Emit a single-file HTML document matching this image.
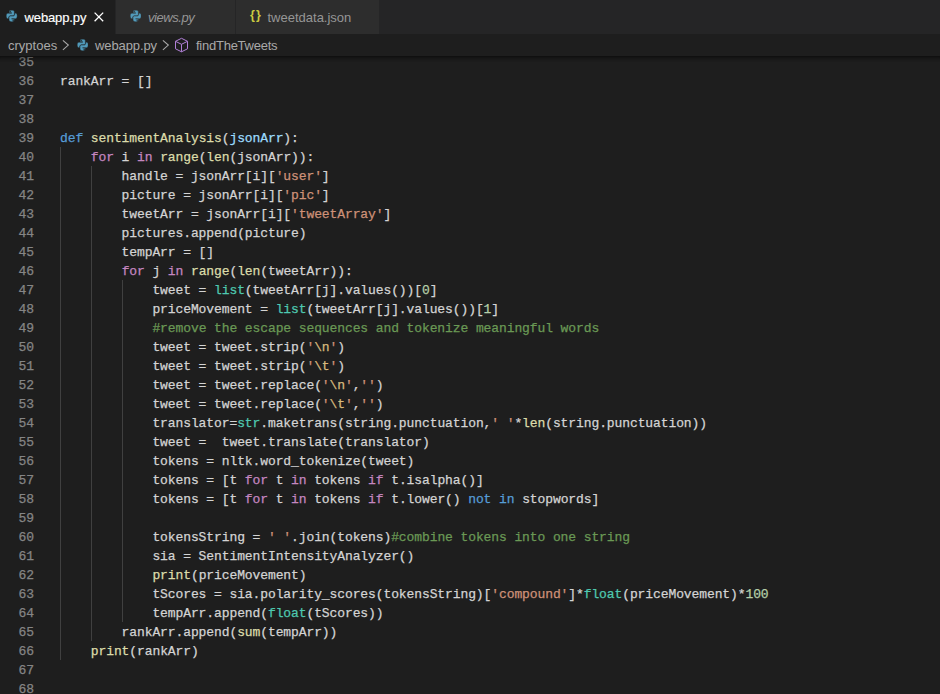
<!DOCTYPE html>
<html><head><meta charset="utf-8"><title>webapp.py</title>
<style>
html,body{margin:0;padding:0;background:#1e1e1e;}
body{width:940px;height:694px;overflow:hidden;position:relative;font-family:"Liberation Sans",sans-serif;}
#tabs{position:absolute;left:0;top:0;width:940px;height:34px;background:#252526;}
.tab{position:absolute;top:0;height:34px;background:#2d2d2d;color:#969696;font-size:13px;line-height:34px;white-space:nowrap;}
.tab.act{background:#1e1e1e;color:#ffffff;}
.tab .lbl{position:absolute;top:1px;}
.tab svg{position:absolute;}
#bc{position:absolute;left:0;top:34px;width:940px;height:22px;background:#1e1e1e;color:#a9a9a9;font-size:13px;line-height:22px;white-space:nowrap;z-index:3;}
#sh{position:absolute;left:0;top:56px;width:940px;height:6px;z-index:4;box-shadow:#000000 0 6px 6px -6px inset;}
#bc span{position:absolute;top:1px;}#bc svg{position:absolute;}
#ed{position:absolute;left:0;top:52px;width:940px;height:642px;overflow:hidden;z-index:1;}
.ln{position:relative;height:19px;line-height:19px;white-space:pre;font-family:"Liberation Mono",monospace;font-size:13px;letter-spacing:-0.1px;color:#d4d4d4;-webkit-text-stroke:0.25px;}
.no{position:absolute;left:0;top:1px;width:34px;text-align:right;color:#858585;}
.cd{position:absolute;left:60px;top:1px;}
.k{color:#569cd6}.c{color:#c586c0}.f{color:#dcdcaa}.v{color:#9cdcfe}.s{color:#ce9178}.e{color:#d7ba7d}.n{color:#b5cea8}.m{color:#6a9955}.t{color:#4ec9b0}
.g{position:absolute;width:1px;background:#404040;z-index:0;}
</style></head><body>
<div id="tabs">
 <div class="tab act" style="left:0;width:115px;">
  <svg style="left:6.20px;top:9.89px;" width="11.40" height="12.01" viewBox="-2.0 -2.0 115.0 117.0" preserveAspectRatio="none" fill="#519aba" stroke="#1e1e1e" stroke-width="4"><path d="M54.9 0C50.3 0 46 .4 42.1 1.1 30.8 3.1 28.7 7.3 28.7 15v10.3h26.8v3.4H18.6c-7.8 0-14.6 4.7-16.7 13.6-2.5 10.2-2.6 16.6 0 27.2 1.9 8 6.4 13.6 14.2 13.6h9.3V70.8c0-8.8 7.6-16.6 16.7-16.6h26.8c7.5 0 13.4-6.1 13.4-13.6V15c0-7.2-6.1-12.7-13.4-13.9C64.3.3 59.5 0 54.9 0zM40.400 8.200c2.800 0 5 2.300 5 5.100s-2.200 5.100-5 5.100-5-2.300-5-5.100 2.200-5.100 5-5.100z"/><path d="M85.600 28.700v11.900c0 9.200-7.800 17-16.700 17H42.100c-7.300 0-13.400 6.300-13.400 13.600v25.500c0 7.300 6.300 11.500 13.400 13.600 8.500 2.500 16.600 3 26.800 0 6.700-2 13.400-5.900 13.400-13.600V86.500H55.500v-3.400h40.200c7.800 0 10.700-5.400 13.400-13.600 2.800-8.400 2.700-16.500 0-27.200-1.900-7.800-5.600-13.600-13.400-13.600H85.600zM70.600 93.300c2.800 0 5 2.300 5 5.100s-2.200 5.100-5 5.100-5-2.300-5-5.100 2.200-5.100 5-5.100z"/></svg>
  <span class="lbl" style="left:24.5px;-webkit-text-stroke:0.15px;letter-spacing:-0.12px;">webapp.py</span>
  <svg style="left:93.5px;top:12px;" width="10" height="10" viewBox="0 0 10 10"><path d="M0.6 0.6 L9.2 9.2 M9.2 0.6 L0.6 9.2" stroke="#ffffff" stroke-width="1.3" fill="none"/></svg>
 </div>
 <div class="tab" style="left:116px;width:119px;">
  <svg style="left:13.70px;top:9.89px;" width="11.40" height="12.01" viewBox="-2.0 -2.0 115.0 117.0" preserveAspectRatio="none" fill="#519aba" stroke="#2d2d2d" stroke-width="4"><path d="M54.9 0C50.3 0 46 .4 42.1 1.1 30.8 3.1 28.7 7.3 28.7 15v10.3h26.8v3.4H18.6c-7.8 0-14.6 4.7-16.7 13.6-2.5 10.2-2.6 16.6 0 27.2 1.9 8 6.4 13.6 14.2 13.6h9.3V70.8c0-8.8 7.6-16.6 16.7-16.6h26.8c7.5 0 13.4-6.1 13.4-13.6V15c0-7.2-6.1-12.7-13.4-13.9C64.3.3 59.5 0 54.9 0zM40.400 8.200c2.800 0 5 2.300 5 5.100s-2.200 5.100-5 5.100-5-2.300-5-5.100 2.200-5.100 5-5.100z"/><path d="M85.600 28.700v11.900c0 9.200-7.800 17-16.700 17H42.100c-7.300 0-13.400 6.300-13.400 13.600v25.500c0 7.300 6.300 11.500 13.400 13.600 8.500 2.500 16.600 3 26.800 0 6.700-2 13.400-5.900 13.400-13.600V86.500H55.500v-3.400h40.200c7.800 0 10.700-5.400 13.400-13.600 2.800-8.400 2.700-16.500 0-27.200-1.900-7.800-5.600-13.600-13.400-13.600H85.600zM70.600 93.300c2.800 0 5 2.300 5 5.100s-2.200 5.100-5 5.100-5-2.300-5-5.100 2.200-5.100 5-5.100z"/></svg>
  <span class="lbl" style="left:32px;font-style:italic;letter-spacing:-0.45px;">views.py</span>
 </div>
 <div class="tab" style="left:236px;width:143px;">
  <span class="lbl" style="left:14px;top:-2px;color:#cbcb41;font-weight:bold;font-size:12.5px;letter-spacing:1.2px;">{}</span>
  <span class="lbl" style="left:31.5px;">tweetdata.json</span>
 </div>
</div>
<div id="bc">
 <span style="left:8px;">cryptoes</span>
 <svg style="left:61.8px;top:4.5px;" width="8" height="12" viewBox="0 0 8 12"><path d="M0.9 1.4 L6.3 6.1 L0.9 10.8" stroke="#a9a9a9" stroke-width="1.1" fill="none"/></svg>
 <svg style="left:76.90px;top:4.89px;" width="11.40" height="12.01" viewBox="-2.0 -2.0 115.0 117.0" preserveAspectRatio="none" fill="#519aba" stroke="#1e1e1e" stroke-width="4"><path d="M54.9 0C50.3 0 46 .4 42.1 1.1 30.8 3.1 28.7 7.3 28.7 15v10.3h26.8v3.4H18.6c-7.8 0-14.6 4.7-16.7 13.6-2.5 10.2-2.6 16.6 0 27.2 1.9 8 6.4 13.6 14.2 13.6h9.3V70.8c0-8.8 7.6-16.6 16.7-16.6h26.8c7.5 0 13.4-6.1 13.4-13.6V15c0-7.2-6.1-12.7-13.4-13.9C64.3.3 59.5 0 54.9 0zM40.400 8.200c2.800 0 5 2.300 5 5.100s-2.200 5.100-5 5.100-5-2.300-5-5.100 2.200-5.100 5-5.100z"/><path d="M85.600 28.700v11.900c0 9.200-7.800 17-16.700 17H42.100c-7.300 0-13.400 6.300-13.400 13.600v25.500c0 7.300 6.300 11.500 13.400 13.600 8.500 2.500 16.600 3 26.800 0 6.700-2 13.400-5.900 13.400-13.600V86.500H55.500v-3.400h40.200c7.800 0 10.700-5.400 13.400-13.600 2.800-8.400 2.700-16.500 0-27.200-1.900-7.800-5.600-13.600-13.400-13.600H85.600zM70.600 93.300c2.800 0 5 2.300 5 5.100s-2.200 5.100-5 5.100-5-2.300-5-5.100 2.200-5.100 5-5.100z"/></svg>
 <span style="left:95px;letter-spacing:-0.1px;">webapp.py</span>
 <svg style="left:162.4px;top:4.5px;" width="8" height="12" viewBox="0 0 8 12"><path d="M0.9 1.4 L6.3 6.1 L0.9 10.8" stroke="#a9a9a9" stroke-width="1.1" fill="none"/></svg>
 <svg style="left:175px;top:0px;" width="14" height="22" viewBox="0 0 14 22"><path d="M6.5 4.3 L12.5 7.3 L12.5 14.8 L6.5 17.8 L0.5 14.8 L0.5 7.3 Z M0.5 7.3 L6.5 10.3 L12.5 7.3 M6.5 10.3 L6.5 17.8" stroke="#b180d7" stroke-width="1" fill="none" stroke-linejoin="round"/></svg>
 <span style="left:196px;letter-spacing:-0.25px;">findTheTweets</span>
</div>
<div id="sh"></div>
<div id="ed">
<div class="g" style="left:60px;top:95px;height:513px;"></div><div class="g" style="left:91px;top:114px;height:475px;"></div><div class="g" style="left:122px;top:228px;height:342px;"></div>
<div class="ln"><span class="no">35</span><span class="cd"></span></div>
<div class="ln"><span class="no">36</span><span class="cd">rankArr = []</span></div>
<div class="ln"><span class="no">37</span><span class="cd"></span></div>
<div class="ln"><span class="no">38</span><span class="cd"></span></div>
<div class="ln"><span class="no">39</span><span class="cd"><span class="k">def</span> <span class="f">sentimentAnalysis</span>(<span class="v">jsonArr</span>):</span></div>
<div class="ln"><span class="no">40</span><span class="cd">    <span class="c">for</span> i <span class="c">in</span> <span class="f">range</span>(<span class="f">len</span>(jsonArr)):</span></div>
<div class="ln"><span class="no">41</span><span class="cd">        handle = jsonArr[i][<span class="s">'user'</span>]</span></div>
<div class="ln"><span class="no">42</span><span class="cd">        picture = jsonArr[i][<span class="s">'pic'</span>]</span></div>
<div class="ln"><span class="no">43</span><span class="cd">        tweetArr = jsonArr[i][<span class="s">'tweetArray'</span>]</span></div>
<div class="ln"><span class="no">44</span><span class="cd">        pictures.append(picture)</span></div>
<div class="ln"><span class="no">45</span><span class="cd">        tempArr = []</span></div>
<div class="ln"><span class="no">46</span><span class="cd">        <span class="c">for</span> j <span class="c">in</span> <span class="f">range</span>(<span class="f">len</span>(tweetArr)):</span></div>
<div class="ln"><span class="no">47</span><span class="cd">            tweet = <span class="t">list</span>(tweetArr[j].values())[<span class="n">0</span>]</span></div>
<div class="ln"><span class="no">48</span><span class="cd">            priceMovement = <span class="t">list</span>(tweetArr[j].values())[<span class="n">1</span>]</span></div>
<div class="ln"><span class="no">49</span><span class="cd">            <span class="m">#remove the escape sequences and tokenize meaningful words</span></span></div>
<div class="ln"><span class="no">50</span><span class="cd">            tweet = tweet.strip(<span class="s">'</span><span class="e">\n</span><span class="s">'</span>)</span></div>
<div class="ln"><span class="no">51</span><span class="cd">            tweet = tweet.strip(<span class="s">'</span><span class="e">\t</span><span class="s">'</span>)</span></div>
<div class="ln"><span class="no">52</span><span class="cd">            tweet = tweet.replace(<span class="s">'</span><span class="e">\n</span><span class="s">'</span>,<span class="s">''</span>)</span></div>
<div class="ln"><span class="no">53</span><span class="cd">            tweet = tweet.replace(<span class="s">'</span><span class="e">\t</span><span class="s">'</span>,<span class="s">''</span>)</span></div>
<div class="ln"><span class="no">54</span><span class="cd">            translator=<span class="t">str</span>.maketrans(string.punctuation,<span class="s">' '</span>*<span class="f">len</span>(string.punctuation))</span></div>
<div class="ln"><span class="no">55</span><span class="cd">            tweet =  tweet.translate(translator)</span></div>
<div class="ln"><span class="no">56</span><span class="cd">            tokens = nltk.word_tokenize(tweet)</span></div>
<div class="ln"><span class="no">57</span><span class="cd">            tokens = [t <span class="c">for</span> t <span class="c">in</span> tokens <span class="c">if</span> t.isalpha()]</span></div>
<div class="ln"><span class="no">58</span><span class="cd">            tokens = [t <span class="c">for</span> t <span class="c">in</span> tokens <span class="c">if</span> t.lower() <span class="k">not</span> <span class="k">in</span> stopwords]</span></div>
<div class="ln"><span class="no">59</span><span class="cd"></span></div>
<div class="ln"><span class="no">60</span><span class="cd">            tokensString = <span class="s">' '</span>.join(tokens)<span class="m">#combine tokens into one string</span></span></div>
<div class="ln"><span class="no">61</span><span class="cd">            sia = SentimentIntensityAnalyzer()</span></div>
<div class="ln"><span class="no">62</span><span class="cd">            <span class="f">print</span>(priceMovement)</span></div>
<div class="ln"><span class="no">63</span><span class="cd">            tScores = sia.polarity_scores(tokensString)[<span class="s">'compound'</span>]*<span class="t">float</span>(priceMovement)*<span class="n">100</span></span></div>
<div class="ln"><span class="no">64</span><span class="cd">            tempArr.append(<span class="t">float</span>(tScores))</span></div>
<div class="ln"><span class="no">65</span><span class="cd">        rankArr.append(<span class="f">sum</span>(tempArr))</span></div>
<div class="ln"><span class="no">66</span><span class="cd">    <span class="f">print</span>(rankArr)</span></div>
<div class="ln"><span class="no">67</span><span class="cd"></span></div>
<div class="ln"><span class="no">68</span><span class="cd"></span></div>
</div>
</body></html>
